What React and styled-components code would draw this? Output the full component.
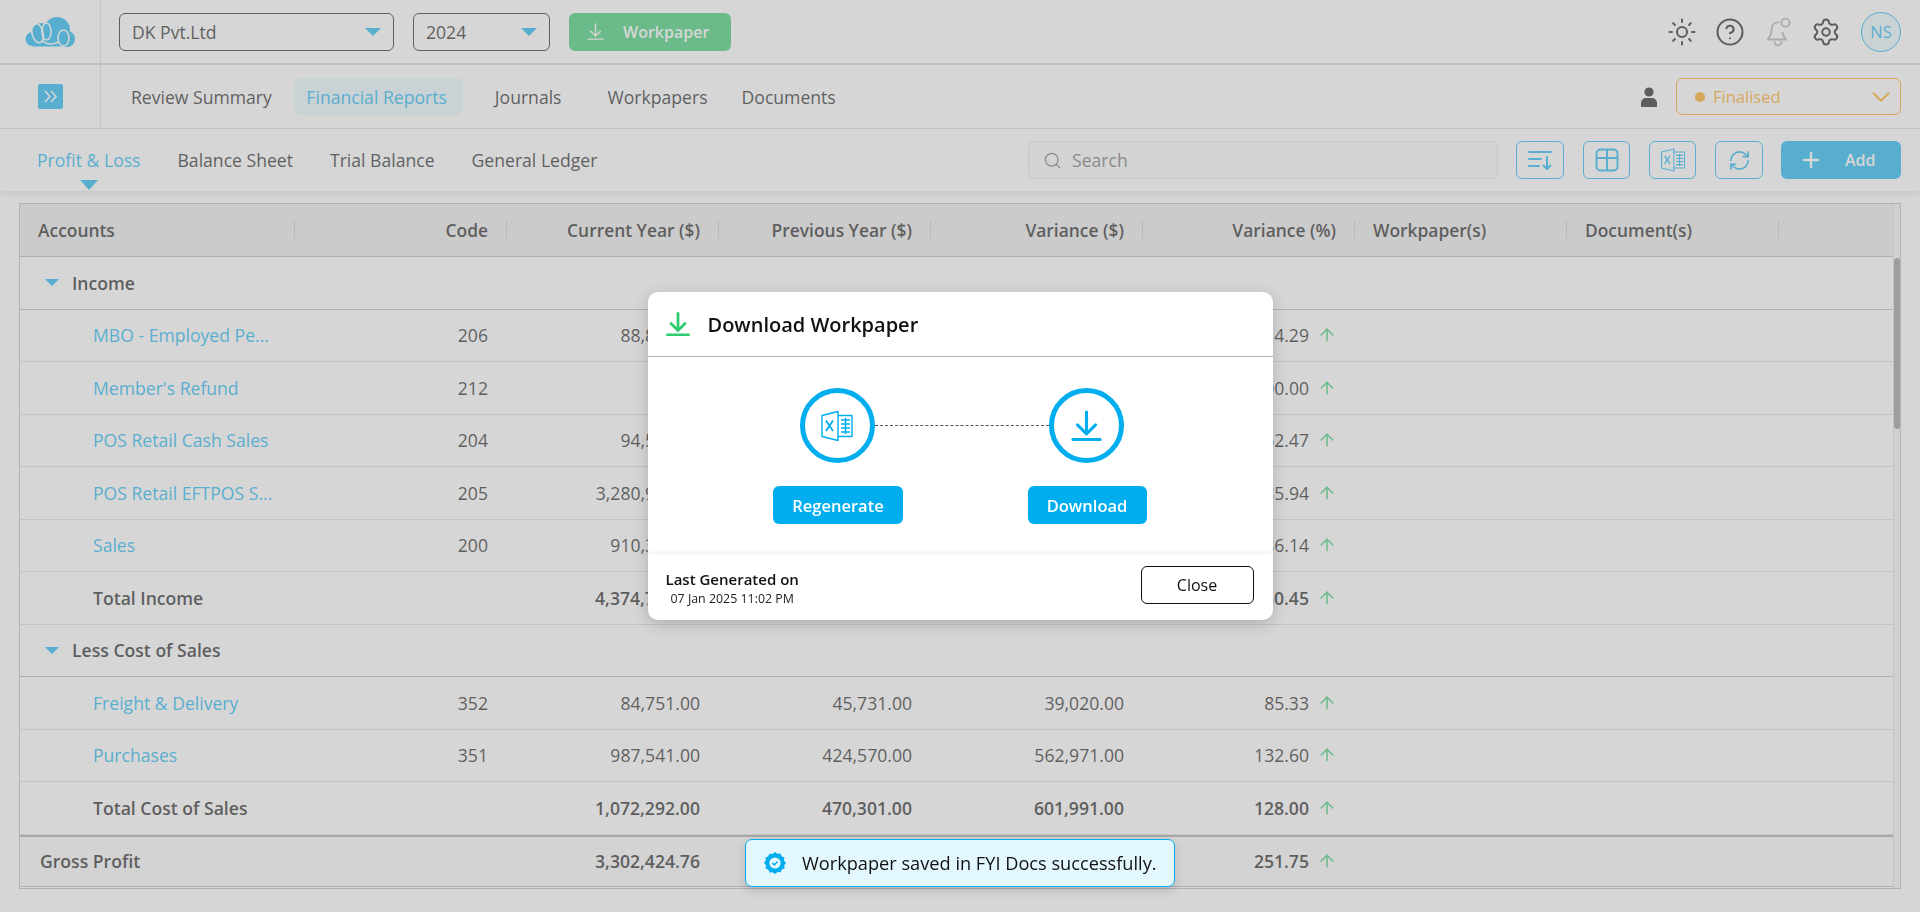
import React from "react";
import styled, { createGlobalStyle } from "styled-components";
import { Sun, CircleHelp, Settings, Search, RefreshCw, Plus, ChevronDown, ArrowUp } from "lucide-react";

const GlobalStyle = createGlobalStyle`
  * { box-sizing: border-box; }
  html, body { margin: 0; height: 100%; overflow: hidden; }
  body {
    font-family: "Open Sans", "Liberation Sans", sans-serif;
    font-size: 17.6px;
    color: #0d0d0d;
    background: #fff;
  }
`;

const BLUE = "#00aeef";
const INK = "#0d0d0d";

const Page = styled.div`
  display: flex;
  flex-direction: column;
  height: 912px;
`;

// top bar
const TopBar = styled.header`
  display: flex;
  align-items: center;
  height: 65px;
  border-bottom: 2px solid #d4d4d4;
`;
const LogoCell = styled.div`
  width: 101px;
  height: 100%;
  flex: none;
  display: flex;
  align-items: center;
  padding-left: 25px;
  border-right: 1px solid #dcdcdc;
`;
const SelectGroup = styled.div`
  display: flex;
  gap: 20px;
  padding-left: 18px;
`;
const Select = styled.div`
  display: flex;
  align-items: center;
  justify-content: space-between;
  width: ${(p) => p.$width}px;
  height: 38px;
  margin-left: ${(p) => p.$nudge || 0}px;
  padding: 0 12px;
  border: 1px solid ${INK};
  border-radius: 6px;
  color: ${INK};
`;
const Caret = styled.span`
  display: block;
  width: 0;
  height: 0;
  border-left: ${(p) => p.$size}px solid transparent;
  border-right: ${(p) => p.$size}px solid transparent;
  border-top: ${(p) => p.$size}px solid ${BLUE};
`;
const WorkpaperButton = styled.button`
  display: flex;
  align-items: center;
  gap: 19px;
  width: 162px;
  height: 38px;
  margin-left: -1px;
  padding: 0 0 0 18px;
  border: 0;
  border-radius: 6px;
  background: #27c766;
  color: #fff;
  font: 600 16px "Open Sans", sans-serif;
`;
const TopIcons = styled.div`
  display: flex;
  align-items: center;
  margin-left: auto;
  padding-right: 19px;
`;
const TopIcon = styled.span`
  display: flex;
  justify-content: center;
  width: 48px;
  color: ${(p) => (p.$muted ? "#aaa" : INK)};
`;
const Avatar = styled.div`
  display: flex;
  align-items: center;
  justify-content: center;
  width: 40px;
  height: 40px;
  margin-left: 11px;
  border: 1px solid ${BLUE};
  border-radius: 50%;
  background: #e5f7fd;
  color: ${BLUE};
  font-size: 16.5px;
  font-weight: 500;
`;

// nav row
const NavBar = styled.nav`
  display: flex;
  align-items: center;
  height: 64px;
  border-bottom: 1px solid #dadada;
`;
const NavToggleCell = styled.div`
  display: flex;
  align-items: center;
  justify-content: center;
  width: 101px;
  height: 100%;
  flex: none;
  border-right: 1px solid #dcdcdc;
`;
const NavToggle = styled.span`
  display: flex;
  align-items: center;
  justify-content: center;
  width: 25px;
  height: 25px;
  border-radius: 2px;
  background: ${BLUE};
`;
const NavList = styled.div`
  display: flex;
  gap: 10px;
  padding-left: 18px;
`;
const NavItem = styled.div`
  display: flex;
  align-items: center;
  height: 37px;
  padding: 0 ${(p) => p.$padRight || 12}px 0 ${(p) => p.$padLeft || 12}px;
  border-radius: 6px;
  background: ${(p) => (p.$active ? "#e5f7fd" : "transparent")};
  color: ${(p) => (p.$active ? BLUE : INK)};
  font-weight: ${(p) => (p.$active ? 500 : 400)};
`;
const NavRight = styled.div`
  display: flex;
  align-items: center;
  gap: 18px;
  margin-left: auto;
  padding-right: 19px;
`;
const StatusSelect = styled.div`
  display: flex;
  align-items: center;
  width: 225px;
  height: 37px;
  padding: 0 4px 0 18px;
  border: 1px solid #ffa206;
  border-radius: 6px;
  color: #ffa206;
  font-size: 16.5px;
`;
const StatusDot = styled.span`
  width: 10px;
  height: 10px;
  margin-right: 8px;
  border-radius: 50%;
  background: #ffa206;
`;
const StatusChevron = styled(ChevronDown)`
  margin-left: auto;
`;

// tabs + toolbar
const TabBar = styled.div`
  display: flex;
  align-items: center;
  height: 62px;
  padding: 0 19px 0 37px;
  box-shadow: 0 3px 6px rgba(0, 0, 0, 0.12);
`;
const Tabs = styled.div`
  display: flex;
  gap: 37px;
`;
const Tab = styled.div`
  position: relative;
  color: ${(p) => (p.$active ? BLUE : INK)};
`;
const TabMarker = styled.span`
  position: absolute;
  left: 50%;
  top: 32px;
  transform: translateX(-50%);
  border-left: 9px solid transparent;
  border-right: 9px solid transparent;
  border-top: 10px solid ${BLUE};
`;
const Toolbar = styled.div`
  display: flex;
  align-items: center;
  margin-left: auto;
`;
const SearchBox = styled.label`
  display: flex;
  align-items: center;
  gap: 8px;
  width: 470px;
  height: 38px;
  margin-right: 18px;
  padding: 0 14px;
  border: 1px solid #e0e0e0;
  border-radius: 6px;
  background: #fbfbfb;
  color: #666;
`;
const SearchInput = styled.input`
  flex: 1;
  min-width: 0;
  border: 0;
  outline: 0;
  background: transparent;
  font: 400 17.6px "Open Sans", sans-serif;
  &::placeholder { color: #666; opacity: 1; }
`;
const ToolButton = styled.button`
  display: flex;
  align-items: center;
  justify-content: center;
  width: ${(p) => p.$width || 47}px;
  height: 38px;
  margin-right: ${(p) => p.$gap || 19}px;
  padding: 0;
  border: 1px solid ${BLUE};
  border-radius: 6px;
  background: #fff;
  color: ${BLUE};
`;
const AddButton = styled.button`
  display: flex;
  align-items: center;
  gap: 22px;
  width: 120px;
  height: 38px;
  padding: 0 0 0 18px;
  border: 0;
  border-radius: 6px;
  background: ${BLUE};
  color: #fff;
  font: 600 16px "Open Sans", sans-serif;
`;

// table
const Content = styled.main`
  padding: 12px 19px 0;
`;
const TableFrame = styled.div`
  display: flex;
  height: 686px;
  border: 1px solid #b2b2bc;
`;
const TableBody = styled.div`
  flex: 1;
  min-width: 0;
`;
const ScrollTrack = styled.div`
  width: 7px;
  flex: none;
  padding-top: 54px;
  background: #f2f2f2;
  border-left: 1px solid #dadada;
`;
const ScrollThumb = styled.div`
  height: 171px;
  background: #8c8c8c;
  border-radius: 3px;
`;
const COLUMNS = "275px repeat(7, 212px) 1fr";
const HeadRow = styled.div`
  display: grid;
  grid-template-columns: ${COLUMNS};
  align-items: center;
  height: 53px;
  background: #e8e8e8;
  border-bottom: 1px solid #b2b2bc;
`;
const HeadCell = styled.div`
  display: flex;
  align-items: center;
  justify-content: ${(p) => (p.$left ? "flex-start" : "flex-end")};
  height: 18px;
  padding: ${(p) => (p.$left ? "0 0 0 18px" : "0 18px 0 0")};
  border-right: 1px solid #c4c4c4;
  color: ${INK};
  font-weight: 600;
  font-size: 17.4px;
  white-space: nowrap;
`;
const SectionRow = styled.div`
  display: flex;
  align-items: center;
  gap: 13px;
  height: 52.5px;
  padding-left: 25px;
  border-bottom: 1px solid #b2b2bc;
  font-weight: 600;
`;
const Row = styled.div`
  display: grid;
  grid-template-columns: ${COLUMNS};
  align-items: center;
  height: 52.5px;
  border-bottom: 1px solid ${(p) => (p.$grand ? "#b2b2bc" : "#dadada")};
  border-top: ${(p) => (p.$grand ? "2px solid #a0a0a0" : "0")};
  background: ${(p) => (p.$grand ? "#f8f8f8" : "transparent")};
  font-weight: ${(p) => (p.$bold ? 600 : 400)};
`;
const NameCell = styled.div`
  padding-left: ${(p) => (p.$grand ? 20 : 73)}px;
  color: ${(p) => (p.$link ? BLUE : INK)};
  white-space: nowrap;
`;
const NumCell = styled.div`
  padding-right: 19px;
  text-align: right;
  white-space: nowrap;
`;
const PercentCell = styled.div`
  display: flex;
  align-items: center;
  justify-content: flex-end;
  gap: 8px;
  padding-right: 18px;
`;
const UpArrow = styled(ArrowUp)`
  color: #27c766;
  flex: none;
`;

// modal
const Overlay = styled.div`
  position: fixed;
  inset: 0;
  display: flex;
  justify-content: center;
  align-items: flex-start;
  padding-top: 292px;
  background: rgba(174, 174, 174, 0.5);
`;
const Modal = styled.section`
  width: 625px;
  height: 328px;
  border-radius: 10px;
  background: #fff;
  box-shadow: 0 4px 16px rgba(0, 0, 0, 0.18);
  display: flex;
  flex-direction: column;
  color: #111;
`;
const ModalHeader = styled.div`
  display: flex;
  align-items: center;
  gap: 18px;
  height: 65px;
  flex: none;
  padding-left: 18px;
  border-bottom: 1px solid #aeb5c4;
`;
const ModalTitle = styled.h2`
  margin: 0;
  font-size: 20px;
  font-weight: 600;
`;
const ModalBody = styled.div`
  display: grid;
  grid-template-columns: 75px 174px 75px;
  grid-template-rows: 75px 38px;
  row-gap: 23px;
  justify-content: center;
  align-content: start;
  flex: 1;
  padding: 31px 0 0 3px;
`;
const StepCircle = styled.div`
  display: flex;
  align-items: center;
  justify-content: center;
  width: 75px;
  height: 75px;
  border: 5px solid ${BLUE};
  border-radius: 50%;
  color: ${BLUE};
`;
const Connector = styled.div`
  align-self: center;
  border-top: 1px dashed #555;
`;
const StepButton = styled.button`
  grid-row: 2;
  grid-column: ${(p) => p.$col};
  justify-self: center;
  width: ${(p) => p.$width}px;
  height: 38px;
  margin-left: 2px;
  border: 0;
  border-radius: 6px;
  background: ${BLUE};
  color: #fff;
  font: 600 16.5px "Open Sans", sans-serif;
`;
const ModalFooter = styled.div`
  display: flex;
  align-items: center;
  justify-content: space-between;
  height: 66px;
  flex: none;
  padding: 0 19px 4px 18px;
  box-shadow: 0 -2px 4px rgba(0, 0, 0, 0.06);
  border-radius: 0 0 10px 10px;
`;
const GeneratedInfo = styled.div`
  padding-top: 6px;
`;
const GeneratedLabel = styled.div`
  font-size: 15px;
  font-weight: 600;
  line-height: 20px;
`;
const GeneratedDate = styled.div`
  padding-left: 5px;
  font-size: 12.4px;
  line-height: 19px;
  color: #222;
`;
const CloseButton = styled.button`
  width: 113px;
  height: 38px;
  border: 1px solid #111;
  border-radius: 6px;
  background: #fff;
  color: #111;
  font: 500 16px "Open Sans", sans-serif;
`;

// toast
const Toast = styled.div`
  position: fixed;
  left: 745px;
  top: 839px;
  display: flex;
  align-items: center;
  gap: 16px;
  width: 430px;
  height: 48px;
  padding-left: 18px;
  border: 1px solid ${BLUE};
  border-radius: 7px;
  background: #e3f7ff;
  color: #111;
  font-weight: 500;
  font-size: 18.2px;
  box-shadow: 0 4px 10px rgba(0, 0, 0, 0.14);
  white-space: nowrap;
`;

const Logo = () => (
  <svg width="50" height="30" viewBox="0 0 50 30">
    <g fill={BLUE}>
      <circle cx="32" cy="13" r="13" />
      <circle cx="16" cy="15" r="9" />
      <circle cx="7.5" cy="22" r="7" />
      <circle cx="42" cy="22" r="8" />
      <rect x="7" y="16" width="35" height="13.5" />
    </g>
    <g fill="none" stroke="#fff" strokeWidth="1.5">
      <ellipse cx="12.5" cy="16" rx="5.5" ry="10" transform="rotate(-14 12.5 16)" />
      <ellipse cx="21.5" cy="14.5" rx="4.5" ry="8.5" />
      <ellipse cx="38.5" cy="21" rx="5.5" ry="8" />
      <path d="M17 23c4 5 10 5 17 2" />
    </g>
  </svg>
);

const DownloadGlyph = ({ size = 24, color = "currentColor", width = 2.4 }) => (
  <svg width={size} height={size} viewBox="0 0 24 24" fill="none" stroke={color} strokeWidth={width} strokeLinecap="round" strokeLinejoin="round">
    <path d="M12 1.5v16.5" />
    <path d="M5 11.5l7 7 7-7" />
    <path d="M1.5 22.8h21" />
  </svg>
);

const ExcelGlyph = ({ size = 30 }) => (
  <svg width={size} height={size} viewBox="0 0 34 34" fill="none" stroke="currentColor" strokeWidth="1.4" strokeLinejoin="round">
    <path d="M2 6.5L18 2.5v29L2 27.5z" />
    <path d="M6 11.5l7 10.5M13 11.5L6 22" strokeWidth="1.8" />
    <path d="M18 6.5h14v21H18" />
    <path d="M21 11h9M21 15h9M21 19h9M21 23h9M25.5 9v16" strokeWidth="1.5" />
  </svg>
);

const SortGlyph = () => (
  <svg width="24" height="22" viewBox="0 0 24 22" fill="none" stroke="currentColor" strokeWidth="2" strokeLinecap="round" strokeLinejoin="round">
    <path d="M1 3h22M1 10h12M1 17h10" />
    <path d="M19 8v12M15.5 16.5L19 20l3.5-3.5" />
  </svg>
);

const ColumnsGlyph = () => (
  <svg width="24" height="24" viewBox="0 0 24 24" fill="none" stroke="currentColor" strokeWidth="1.9">
    <rect x="1.5" y="1.5" width="21" height="21" rx="4" />
    <path d="M1.5 10h21M12 1.5v21" />
  </svg>
);

const BellGlyph = () => (
  <svg width="30" height="30" viewBox="0 0 26 26" fill="none" stroke="currentColor" strokeWidth="1.6" strokeLinecap="round" strokeLinejoin="round">
    <path d="M13.5 4.5C9.5 4.5 7.5 7.5 7.5 11c0 5-2.5 7-3.5 8.5h16c-1-1.3-2.6-3-3-6" />
    <path d="M10 21.5a3 3 0 0 0 6 0" />
    <circle cx="19.5" cy="5" r="3.6" />
  </svg>
);

const UserGlyph = () => (
  <svg width="18" height="20" viewBox="0 0 18 20" fill={INK}>
    <circle cx="9" cy="5" r="4.6" />
    <path d="M1 20v-4c0-3 2.5-5 5-5h6c2.5 0 5 2 5 5v4z" />
  </svg>
);

const ExpandGlyph = () => (
  <svg width="15" height="15" viewBox="0 0 15 15" fill="none" stroke="#fff" strokeWidth="1.5">
    <path d="M2 2l5 5.5L2 13M8 2l5 5.5L8 13" />
  </svg>
);

const BadgeCheck = () => (
  <svg width="22" height="22" viewBox="0 0 22 22">
    <path
      fill={BLUE}
      d="M11 0l2.4 1.8 3-.3 1.2 2.7 2.7 1.2-.3 3L22 11l-1.8 2.4.3 3-2.7 1.2-1.2 2.7-3-.3L11 22l-2.4-1.8-3 .3-1.2-2.7-2.7-1.2.3-3L0 11l1.8-2.4-.3-3 2.7-1.2 1.2-2.7 3 .3z"
    />
    <circle cx="11" cy="11" r="5.6" fill="#e3f7ff" />
    <path d="M8.4 11l1.9 1.9 3.3-3.4" fill="none" stroke={BLUE} strokeWidth="1.5" />
  </svg>
);

const columns = ["Code", "Current Year ($)", "Previous Year ($)", "Variance ($)", "Variance (%)"];

const incomeRows = [
  { name: "MBO - Employed Pe...", code: "206", cy: "88,844.00", py: "77,900.00", v: "10,944.00", p: "14.29" },
  { name: "Member's Refund", code: "212", cy: "80.00", py: "40.00", v: "40.00", p: "100.00" },
  { name: "POS Retail Cash Sales", code: "204", cy: "94,552.00", py: "58,200.00", v: "36,352.00", p: "62.47" },
  { name: "POS Retail EFTPOS S...", code: "205", cy: "3,280,940.00", py: "849,100.00", v: "2,431,840.00", p: "285.94" },
  { name: "Sales", code: "200", cy: "910,345.00", py: "257,700.00", v: "652,645.00", p: "286.14" },
];

const costRows = [
  { name: "Freight & Delivery", code: "352", cy: "84,751.00", py: "45,731.00", v: "39,020.00", p: "85.33" },
  { name: "Purchases", code: "351", cy: "987,541.00", py: "424,570.00", v: "562,971.00", p: "132.60" },
];

const AmountCells = ({ row }) => (
  <>
    <NumCell>{row.code}</NumCell>
    <NumCell>{row.cy}</NumCell>
    <NumCell>{row.py}</NumCell>
    <NumCell>{row.v}</NumCell>
    <PercentCell>
      {row.p}
      <UpArrow size={20} strokeWidth={1.8} />
    </PercentCell>
  </>
);

const AccountRows = ({ rows }) =>
  rows.map((row) => (
    <Row key={row.name}>
      <NameCell $link>{row.name}</NameCell>
      <AmountCells row={row} />
    </Row>
  ));

export default function App() {
  return (
    <>
      <GlobalStyle />
      <Page>
        <TopBar>
          <LogoCell>
            <Logo />
          </LogoCell>
          <SelectGroup>
            <Select $width={275}>
              DK Pvt.Ltd
              <Caret $size={8} />
            </Select>
            <Select $width={137} $nudge={-1}>
              2024
              <Caret $size={8} />
            </Select>
            <WorkpaperButton>
              <DownloadGlyph size={17} width={2} />
              Workpaper
            </WorkpaperButton>
          </SelectGroup>
          <TopIcons>
            <TopIcon><Sun size={30} strokeWidth={1.6} /></TopIcon>
            <TopIcon><CircleHelp size={30} strokeWidth={1.6} /></TopIcon>
            <TopIcon $muted><BellGlyph /></TopIcon>
            <TopIcon><Settings size={30} strokeWidth={1.6} /></TopIcon>
            <Avatar>NS</Avatar>
          </TopIcons>
        </TopBar>

        <NavBar>
          <NavToggleCell>
            <NavToggle>
              <ExpandGlyph />
            </NavToggle>
          </NavToggleCell>
          <NavList>
            <NavItem>Review Summary</NavItem>
            <NavItem $active $padLeft={12.5} $padRight={16}>Financial Reports</NavItem>
            <NavItem $padLeft={22} $padRight={24}>Journals</NavItem>
            <NavItem>Workpapers</NavItem>
            <NavItem>Documents</NavItem>
          </NavList>
          <NavRight>
            <UserGlyph />
            <StatusSelect>
              <StatusDot />
              Finalised
              <StatusChevron size={30} strokeWidth={1.5} />
            </StatusSelect>
          </NavRight>
        </NavBar>

        <TabBar>
          <Tabs>
            <Tab $active>
              Profit &amp; Loss
              <TabMarker />
            </Tab>
            <Tab>Balance Sheet</Tab>
            <Tab>Trial Balance</Tab>
            <Tab>General Ledger</Tab>
          </Tabs>
          <Toolbar>
            <SearchBox>
              <Search size={19} strokeWidth={1.6} />
              <SearchInput placeholder="Search" />
            </SearchBox>
            <ToolButton $width={48}><SortGlyph /></ToolButton>
            <ToolButton $width={47}><ColumnsGlyph /></ToolButton>
            <ToolButton $width={47}><ExcelGlyph size={26} /></ToolButton>
            <ToolButton $width={48} $gap={18}><RefreshCw size={23} strokeWidth={1.7} /></ToolButton>
            <AddButton>
              <Plus size={24} strokeWidth={2.4} />
              Add
            </AddButton>
          </Toolbar>
        </TabBar>

        <Content>
          <TableFrame>
            <TableBody>
              <HeadRow>
                <HeadCell $left>Accounts</HeadCell>
                {columns.map((c) => (
                  <HeadCell key={c}>{c}</HeadCell>
                ))}
                <HeadCell $left>Workpaper(s)</HeadCell>
                <HeadCell $left>Document(s)</HeadCell>
              </HeadRow>

              <SectionRow>
                <Caret $size={7} />
                Income
              </SectionRow>
              <AccountRows rows={incomeRows} />
              <Row $bold>
                <NameCell>Total Income</NameCell>
                <AmountCells row={{ code: "", cy: "4,374,761.00", py: "1,243,940.00", v: "3,130,821.00", p: "250.45" }} />
              </Row>

              <SectionRow>
                <Caret $size={7} />
                Less Cost of Sales
              </SectionRow>
              <AccountRows rows={costRows} />
              <Row $bold>
                <NameCell>Total Cost of Sales</NameCell>
                <AmountCells row={{ code: "", cy: "1,072,292.00", py: "470,301.00", v: "601,991.00", p: "128.00" }} />
              </Row>
              <Row $bold $grand>
                <NameCell $grand>Gross Profit</NameCell>
                <AmountCells row={{ code: "", cy: "3,302,424.76", py: "773,639.00", v: "2,528,785.76", p: "251.75" }} />
              </Row>
            </TableBody>
            <ScrollTrack>
              <ScrollThumb />
            </ScrollTrack>
          </TableFrame>
        </Content>
      </Page>

      <Overlay>
        <Modal>
          <ModalHeader>
            <DownloadGlyph size={24} color="#2ecc71" width={2.8} />
            <ModalTitle>Download Workpaper</ModalTitle>
          </ModalHeader>
          <ModalBody>
            <StepCircle><ExcelGlyph size={34} /></StepCircle>
            <Connector />
            <StepCircle><DownloadGlyph size={31} width={2.4} /></StepCircle>
            <StepButton $col={1} $width={130}>Regenerate</StepButton>
            <StepButton $col={3} $width={119}>Download</StepButton>
          </ModalBody>
          <ModalFooter>
            <GeneratedInfo>
              <GeneratedLabel>Last Generated on</GeneratedLabel>
              <GeneratedDate>07 Jan 2025 11:02 PM</GeneratedDate>
            </GeneratedInfo>
            <CloseButton>Close</CloseButton>
          </ModalFooter>
        </Modal>
      </Overlay>

      <Toast>
        <BadgeCheck />
        Workpaper saved in FYI Docs successfully.
      </Toast>
    </>
  );
}
